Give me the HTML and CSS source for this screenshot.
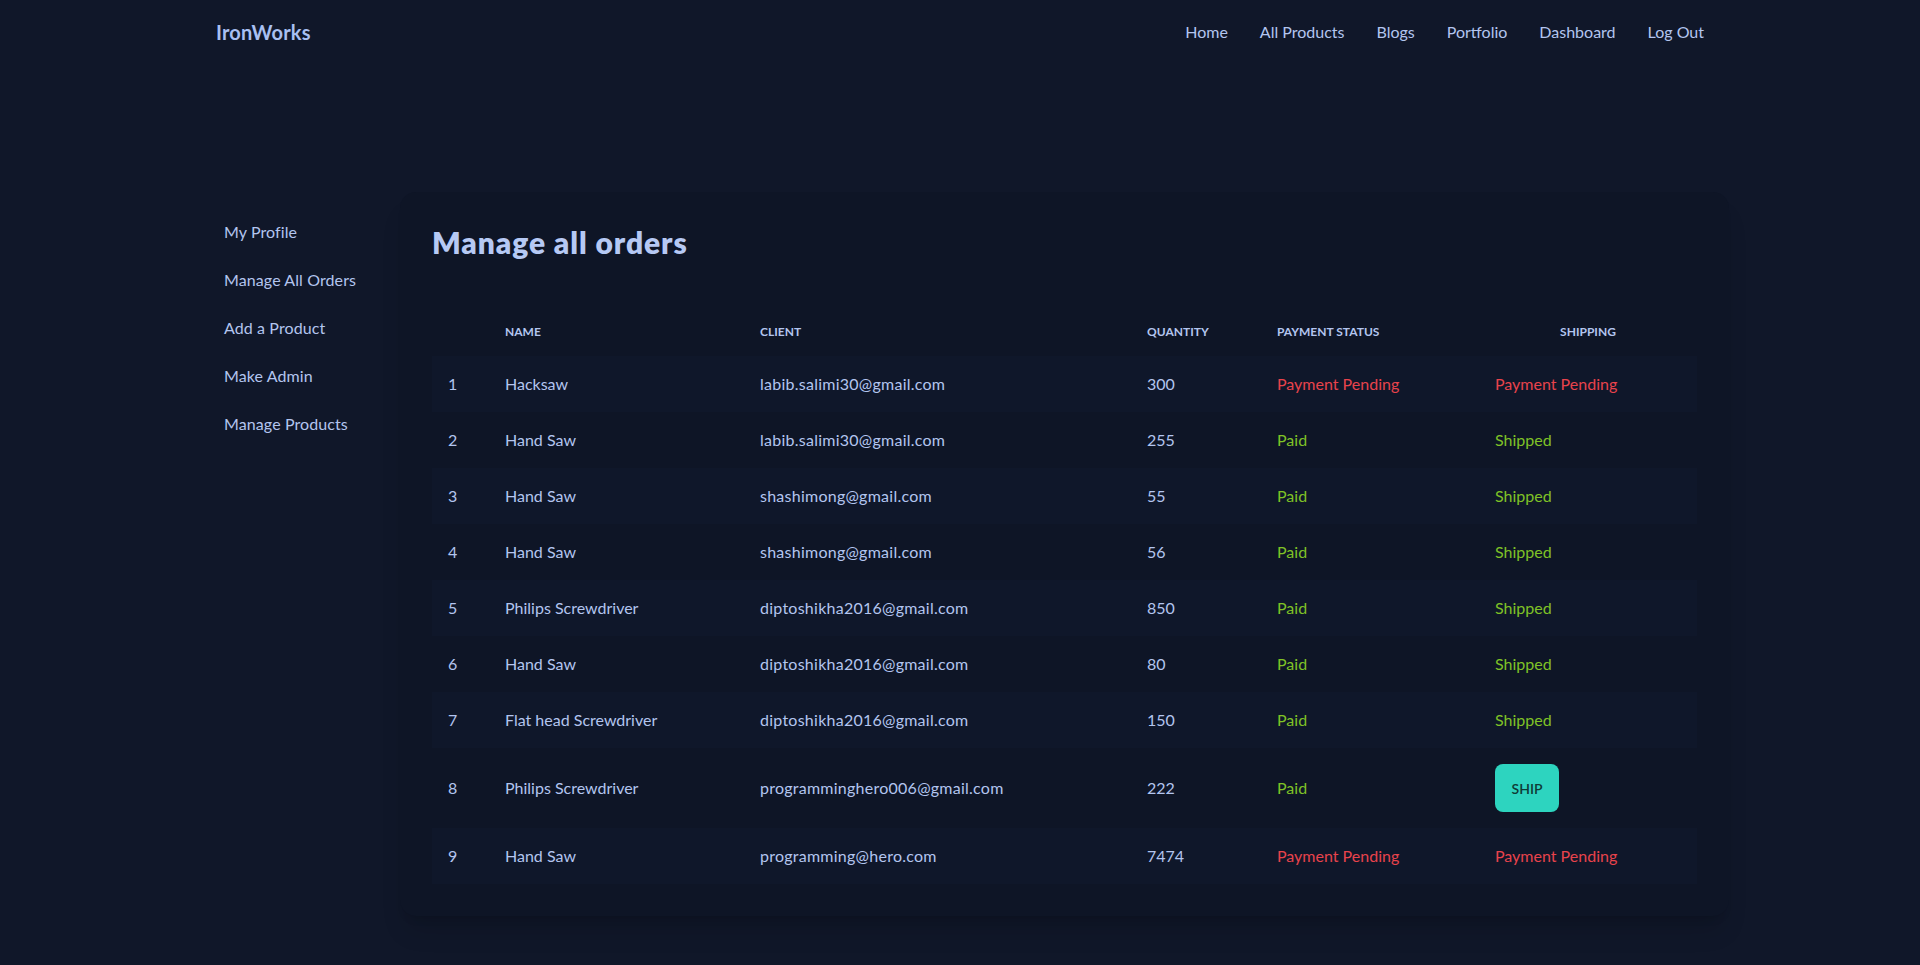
FILE: index.html
```html
<!DOCTYPE html>
<html lang="en">
<head>
<meta charset="utf-8">
<title>IronWorks - Manage all orders</title>
<link rel="stylesheet" href="styles.css">
</head>
<body>
<header class="navbar">
  <a class="logo" href="#">IronWorks</a>
  <ul class="nav-menu">
    <li><a href="#">Home</a></li>
    <li><a href="#">All Products</a></li>
    <li><a href="#">Blogs</a></li>
    <li><a href="#">Portfolio</a></li>
    <li><a href="#">Dashboard</a></li>
    <li><a href="#">Log Out</a></li>
  </ul>
</header>

<main class="dashboard">
  <aside class="sidebar">
    <ul class="side-menu">
      <li><a href="#">My Profile</a></li>
      <li><a href="#">Manage All Orders</a></li>
      <li><a href="#">Add a Product</a></li>
      <li><a href="#">Make Admin</a></li>
      <li><a href="#">Manage Products</a></li>
    </ul>
  </aside>

  <section class="card">
    <h2 class="title">Manage all orders</h2>
    <table class="orders">
      <colgroup>
        <col class="c-num"><col class="c-name"><col class="c-client"><col class="c-qty"><col class="c-pay"><col class="c-ship">
      </colgroup>
      <thead>
        <tr><th></th><th>Name</th><th>Client</th><th>Quantity</th><th>Payment Status</th><th class="center">Shipping</th></tr>
      </thead>
      <tbody>
        <tr><td>1</td><td>Hacksaw</td><td>labib.salimi30@gmail.com</td><td>300</td><td class="pending">Payment Pending</td><td class="pending">Payment Pending</td></tr>
        <tr><td>2</td><td>Hand Saw</td><td>labib.salimi30@gmail.com</td><td>255</td><td class="ok">Paid</td><td class="ok">Shipped</td></tr>
        <tr><td>3</td><td>Hand Saw</td><td>shashimong@gmail.com</td><td>55</td><td class="ok">Paid</td><td class="ok">Shipped</td></tr>
        <tr><td>4</td><td>Hand Saw</td><td>shashimong@gmail.com</td><td>56</td><td class="ok">Paid</td><td class="ok">Shipped</td></tr>
        <tr><td>5</td><td>Philips Screwdriver</td><td>diptoshikha2016@gmail.com</td><td>850</td><td class="ok">Paid</td><td class="ok">Shipped</td></tr>
        <tr><td>6</td><td>Hand Saw</td><td>diptoshikha2016@gmail.com</td><td>80</td><td class="ok">Paid</td><td class="ok">Shipped</td></tr>
        <tr><td>7</td><td>Flat head Screwdriver</td><td>diptoshikha2016@gmail.com</td><td>150</td><td class="ok">Paid</td><td class="ok">Shipped</td></tr>
        <tr><td>8</td><td>Philips Screwdriver</td><td>programminghero006@gmail.com</td><td>222</td><td class="ok">Paid</td><td><button class="ship-btn">Ship</button></td></tr>
        <tr><td>9</td><td>Hand Saw</td><td>programming@hero.com</td><td>7474</td><td class="pending">Payment Pending</td><td class="pending">Payment Pending</td></tr>
      </tbody>
    </table>
  </section>
</main>
</body>
</html>
```

FILE: styles.css
```css
* { box-sizing: border-box; }

html, body {
  margin: 0;
  padding: 0;
}

body {
  background: #101729;
  color: #b3c5ef;
  font-family: Lato, "Liberation Sans", sans-serif;
  font-size: 16px;
  line-height: 24px;
  min-height: 965px;
}

a {
  color: inherit;
  text-decoration: none;
}

ul {
  list-style: none;
  margin: 0;
  padding: 0;
}

/* Navbar */
.navbar {
  width: 1536px;
  margin: 0 auto;
  padding: 8px;
  min-height: 64px;
  display: flex;
  align-items: center;
  justify-content: space-between;
}

.logo {
  display: flex;
  align-items: center;
  height: 48px;
  padding: 0 16px;
  font-size: 20px;
  font-weight: 700;
  letter-spacing: 0.2px;
  color: #a9c0f2;
}

.nav-menu {
  display: flex;
}

.nav-menu a {
  display: block;
  padding: 12px 16px;
}

/* Dashboard */
.dashboard {
  width: 1536px;
  margin: 128px auto 0;
  display: flex;
  align-items: flex-start;
}

.sidebar {
  width: 208px;
  flex: none;
  padding: 16px;
}

.side-menu a {
  display: block;
  padding: 12px 16px;
  letter-spacing: 0.1px;
}

.card {
  flex: 1;
  background: #0e1526;
  border-radius: 16px;
  padding: 32px;
  box-shadow: 0 20px 25px -5px rgba(0, 0, 0, 0.12), 0 8px 10px -6px rgba(0, 0, 0, 0.12);
}

.title {
  margin: 0 0 48px;
  font-size: 30px;
  line-height: 36px;
  font-weight: 800;
  letter-spacing: 0.9px;
  color: #b6c9f4;
}

/* Table */
.orders {
  width: 100%;
  table-layout: fixed;
  border-collapse: collapse;
  white-space: nowrap;
}

.c-num { width: 57px; }
.c-name { width: 255px; }
.c-client { width: 387px; }
.c-qty { width: 130px; }
.c-pay { width: 218px; }
.c-ship { width: 218px; }

.orders th {
  padding: 16px;
  font-size: 12px;
  line-height: 16px;
  font-weight: 700;
  text-transform: uppercase;
  text-align: left;
}

.orders th.center { text-align: center; }

.orders td {
  padding: 16px;
  text-align: left;
  vertical-align: middle;
}

.orders td:nth-child(3) { letter-spacing: 0.25px; }

.orders tbody tr:nth-child(odd) td {
  background: #0f172a;
}

.pending { color: #e8434c; }
.ok { color: #7fc226; }

.ship-btn {
  display: inline-flex;
  align-items: center;
  justify-content: center;
  height: 48px;
  width: 64px;
  padding: 0 16px;
  border: none;
  border-radius: 8px;
  background: #2dd4bf;
  color: #0f3b36;
  font-family: inherit;
  font-size: 14px;
  font-weight: 600;
  letter-spacing: 0;
  text-transform: uppercase;
  cursor: pointer;
}
```
